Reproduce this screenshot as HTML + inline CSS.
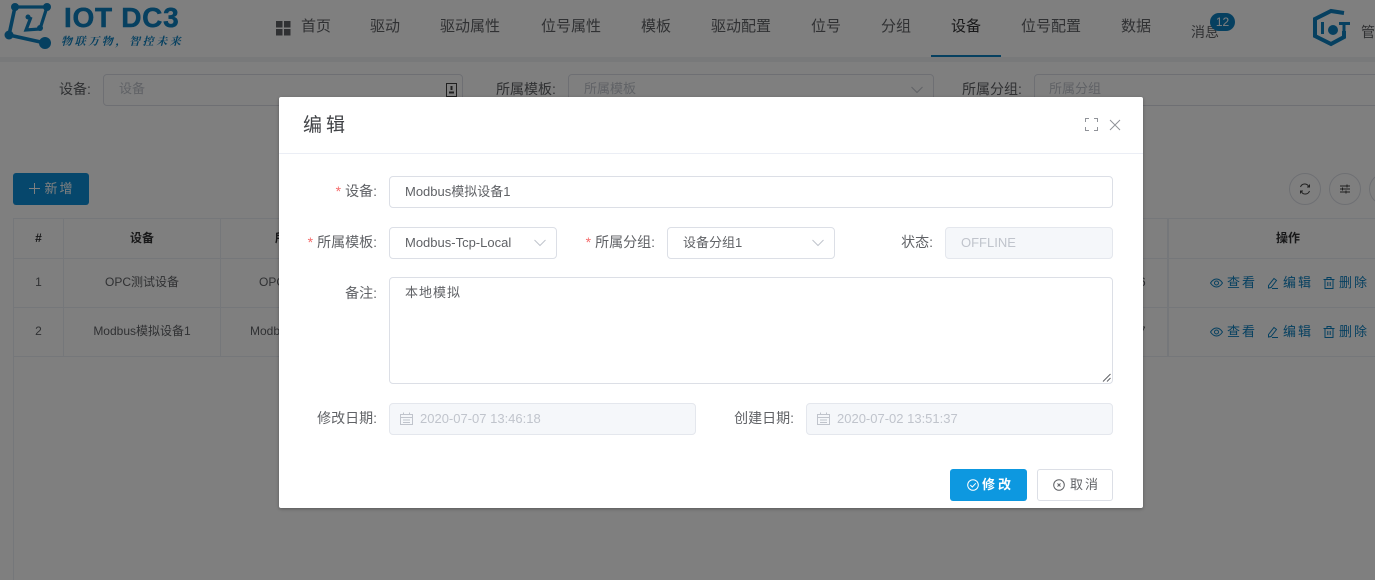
<!DOCTYPE html>
<html lang="zh"><head><meta charset="utf-8"><title>IOT DC3</title>
<style>
*{box-sizing:border-box}
html,body{margin:0;padding:0;width:1375px;height:580px;overflow:hidden;background:#fff;font-family:"Liberation Sans","Noto Sans CJK SC",sans-serif;font-size:14px;color:#606266}
.a{position:absolute;white-space:nowrap}
.nav{top:17px;font-size:15px;line-height:20px;color:#606266}
.inp{border:1px solid #dcdfe6;border-radius:4px;background:#fff}
.mask{position:absolute;left:0;top:0;width:1375px;height:580px;background:rgba(0,0,0,.5)}
.dlg{position:absolute;left:279px;top:97px;width:864px;height:411px;background:#fff;border-radius:2px;box-shadow:0 1px 3px rgba(0,0,0,.3)}
.lab{font-size:14px;line-height:20px;color:#606266;text-align:right}
.req{color:#f56c6c;margin-right:4px}
.box{position:absolute;border:1px solid #dcdfe6;border-radius:4px;background:#fff;font-size:13px;line-height:30px;color:#606266;padding-left:15px;white-space:nowrap}
.dis{background:#f5f7fa;border-color:#e4e7ed;color:#c0c4cc}
.th{font-size:12px;font-weight:700;color:#303133;text-align:center;line-height:20px}
.td{font-size:12px;color:#606266;text-align:center;line-height:20px}
.line{position:absolute;background:#ebeef5}
.op{font-size:13px;color:#0d80c0;letter-spacing:2px;line-height:20px}
.rnd{position:absolute;width:32px;height:32px;border:1px solid #dcdfe6;border-radius:50%;top:173px;background:#fff}
</style></head><body>
<!-- header -->
<svg class="a" style="left:4px;top:3px" width="50" height="48" viewBox="0 0 50 48" fill="none" stroke="#0d80c0" stroke-width="3.6">
<path d="M11 4L43 4L36 26L22 27L27 14" stroke-width="3.200"/><path d="M11 4L5 32L41 40"/>
<g fill="#0d80c0" stroke="none"><circle cx="11" cy="4" r="4"/><circle cx="43" cy="4" r="4"/><circle cx="5" cy="32" r="4.500"/><circle cx="41" cy="40" r="6"/><circle cx="36" cy="25" r="3"/><circle cx="24" cy="14" r="2.500"/></g></svg>
<div class="a" style="left:64px;top:1px;font-size:28px;font-weight:700;line-height:34px;color:#0d80c0;letter-spacing:.7px;-webkit-text-stroke:.5px #0d80c0">IOT DC3</div>
<div class="a" style="left:61px;top:33px;font-family:'Noto Serif CJK SC',serif;font-style:italic;font-size:11px;font-weight:700;line-height:16px;letter-spacing:2.600px;color:#0d80c0">物联万物，智控未来</div>
<svg class="a" style="left:276px;top:21px" width="15" height="15"><path fill="#606266" d="M0 0h6.500v6.500H0zM8 0h6.500v6.500H8zM0 8h6.500v6.500H0zM8 8h6.500v6.500H8z"/></svg>
<div class="a nav" style="left:301px">首页</div>
<div class="a nav" style="left:370px">驱动</div>
<div class="a nav" style="left:440px">驱动属性</div>
<div class="a nav" style="left:541px">位号属性</div>
<div class="a nav" style="left:641px">模板</div>
<div class="a nav" style="left:711px">驱动配置</div>
<div class="a nav" style="left:811px">位号</div>
<div class="a nav" style="left:881px">分组</div>
<div class="a nav" style="left:951px;color:#303133">设备</div>
<div class="a" style="left:931px;top:55px;width:70px;height:2px;background:#0d80c0"></div>
<div class="a nav" style="left:1021px">位号配置</div>
<div class="a nav" style="left:1121px">数据</div>
<div class="a" style="left:1191px;top:23px;font-size:14px;line-height:18px;color:#606266">消息</div>
<div class="a" style="left:1210px;top:13px;width:25px;height:18px;border-radius:9px;background:#0d80c0;color:#fff;font-size:12px;line-height:18px;text-align:center">12</div>
<svg class="a" style="left:1311px;top:8px" width="40" height="40" viewBox="0 0 40 40" fill="none" stroke="#0d80c0" stroke-width="4">
<path d="M33 5L20 3L4 11V28L20 36L33 29L33 23"/><path d="M11.500 14V26" stroke-width="3"/><path d="M28 15.500H39M33 15V27" stroke-width="3"/><circle cx="22" cy="22" r="5" fill="#0d80c0" stroke="none"/></svg>
<div class="a" style="left:1361px;top:23px;font-size:14px;line-height:18px;color:#606266">管理员</div>
<div class="a" style="left:0;top:57px;width:1375px;height:5px;background:#f0f2f5"></div>
<!-- filters -->
<div class="a lab" style="left:59px;top:79px">设备:</div>
<div class="a inp" style="left:103px;top:74px;width:360px;height:32px"></div>
<div class="a" style="left:119px;top:79px;font-size:13px;line-height:20px;color:#c0c4cc">设备</div>
<svg class="a" style="left:446px;top:83px" width="11" height="14" fill="none" stroke="#404040"><rect x=".5" y=".5" width="10" height="13"/><path d="M5.500 3v4M3 9.500h5" stroke-width="2"/></svg>
<div class="a lab" style="left:496px;top:79px">所属模板:</div>
<div class="a inp" style="left:568px;top:74px;width:366px;height:32px"></div>
<div class="a" style="left:584px;top:79px;font-size:13px;line-height:20px;color:#c0c4cc">所属模板</div>
<svg class="a" style="left:911px;top:86px" width="12" height="8" fill="none" stroke="#c0c4cc"><path d="M.5 1L6 6.500L11.500 1"/></svg>
<div class="a lab" style="left:962px;top:79px">所属分组:</div>
<div class="a inp" style="left:1034px;top:74px;width:360px;height:32px"></div>
<div class="a" style="left:1049px;top:79px;font-size:13px;line-height:20px;color:#c0c4cc">所属分组</div>
<!-- toolbar -->
<div class="a" style="left:13px;top:173px;width:76px;height:32px;border-radius:3px;background:#0d8fd8;color:#fff;font-size:13px;line-height:32px;text-align:center;letter-spacing:2px;padding-left:2px">
<svg width="11" height="11" style="vertical-align:-1px;margin-right:4px"><path d="M5.500 0v11M0 5.500h11" stroke="#fff" fill="none"/></svg>新增</div>
<div class="rnd" style="left:1289px"><svg width="30" height="30" fill="none" stroke="#404040"><path d="M10.500 13a4.500 4.500 0 0 1 8-1l.5 1M19.500 17a4.500 4.500 0 0 1-8 1l-.5-1M19.500 10.500v2.500h-2.500M10.500 19.500v-2.500h2.500"/></svg></div>
<div class="rnd" style="left:1329px"><svg width="30" height="30" fill="none" stroke="#404040"><path d="M10 12h10M10 15h10M10 18h10M17 10.500v3M12.500 13.500v3M16 16.500v3"/></svg></div>
<div class="rnd" style="left:1369px"></div>
<!-- table -->
<div class="line" style="left:13px;top:218px;width:1362px;height:1px"></div>
<div class="line" style="left:13px;top:258px;width:1362px;height:1px"></div>
<div class="line" style="left:13px;top:307px;width:1362px;height:1px"></div>
<div class="line" style="left:13px;top:356px;width:1362px;height:1px"></div>
<div class="line" style="left:13px;top:218px;width:1px;height:362px"></div>
<div class="line" style="left:63px;top:218px;width:1px;height:138px"></div>
<div class="line" style="left:220px;top:218px;width:1px;height:138px"></div>
<div class="line" style="left:1167px;top:218px;width:2px;height:138px"></div>
<div class="a th" style="left:14px;top:228px;width:49px">#</div>
<div class="a th" style="left:64px;top:228px;width:156px">设备</div>
<div class="a th" style="left:275px;top:228px">所属模板</div>
<div class="a th" style="left:1185px;top:228px;width:206px">操作</div>
<div class="a td" style="left:14px;top:272px;width:49px">1</div>
<div class="a td" style="left:64px;top:272px;width:156px">OPC测试设备</div>
<div class="a td" style="left:259px;top:272px">OPC-Local</div>
<div class="a td" style="left:1139px;top:272px">6</div>
<div class="a" style="left:14px;top:308px;width:1361px;height:48px;background:#f5f7fa;z-index:-1"></div>
<div class="a td" style="left:14px;top:321px;width:49px">2</div>
<div class="a td" style="left:64px;top:321px;width:156px">Modbus模拟设备1</div>
<div class="a td" style="left:250px;top:321px">Modbus-Tcp</div>
<div class="a td" style="left:1139px;top:321px">7</div>
<svg width="0" height="0" style="position:absolute"><defs>
<g id="eye" fill="none" stroke="#0d80c0"><path d="M.5 6C2.500 3 4.500 2 6.500 2S10.500 3 12.500 6C10.500 9 8.500 10 6.500 10S2.500 9 .5 6z"/><circle cx="6.500" cy="6" r="2"/></g>
<g id="pen" fill="none" stroke="#0d80c0"><path d="M7 1.500L9.500 3.500L4 10.500L1.500 11V8.500zM5 11.500H11"/></g>
<g id="bin" fill="none" stroke="#0d80c0"><path d="M.5 2.500H11.500M4 2.500V.5H8V2.500M2 2.500V11.500H10V2.500M4.800 5V9M7.200 5V9"/></g>
</defs></svg>
<div class="a op" style="left:1227px;top:273px">查看</div>
<div class="a op" style="left:1283px;top:273px">编辑</div>
<div class="a op" style="left:1339px;top:273px">删除</div>
<svg class="a" style="left:1210px;top:277px" width="13" height="12"><use href="#eye"/></svg>
<svg class="a" style="left:1267px;top:277px" width="12" height="12"><use href="#pen"/></svg>
<svg class="a" style="left:1323px;top:277px" width="12" height="12"><use href="#bin"/></svg>
<div class="a op" style="left:1227px;top:322px">查看</div>
<div class="a op" style="left:1283px;top:322px">编辑</div>
<div class="a op" style="left:1339px;top:322px">删除</div>
<svg class="a" style="left:1210px;top:326px" width="13" height="12"><use href="#eye"/></svg>
<svg class="a" style="left:1267px;top:326px" width="12" height="12"><use href="#pen"/></svg>
<svg class="a" style="left:1323px;top:326px" width="12" height="12"><use href="#bin"/></svg>

<div class="mask"></div>
<!-- dialog -->
<div class="dlg">
<div class="a" style="left:24px;top:16px;font-size:19px;line-height:26px;letter-spacing:4px;color:#404246">编辑</div>
<svg class="a" style="left:806px;top:21px" width="13" height="13" fill="none" stroke="#909399"><path d="M.5 4V.5H4M9 .5h3.500V4M12.500 9v3.500H9M4 12.500H.5V9"/></svg>
<svg class="a" style="left:830px;top:22px" width="12" height="12" fill="none" stroke="#909399"><path d="M1 1L11 11M11 1L1 11"/></svg>
<div class="a" style="left:0;top:56px;width:864px;height:1px;background:#ebeef5"></div>

<div class="a lab" style="right:766px;top:84px"><span class="req">*</span>设备:</div>
<div class="box" style="left:110px;top:79px;width:724px;height:32px">Modbus模拟设备1</div>

<div class="a lab" style="right:766px;top:135px"><span class="req">*</span>所属模板:</div>
<div class="box" style="left:110px;top:130px;width:168px;height:32px">Modbus-Tcp-Local<svg class="a" style="left:144px;top:11px" width="12" height="8" fill="none" stroke="#c0c4cc"><path d="M.5 1L6 6.500L11.500 1"/></svg></div>

<div class="a lab" style="right:488px;top:135px"><span class="req">*</span>所属分组:</div>
<div class="box" style="left:388px;top:130px;width:168px;height:32px">设备分组1<svg class="a" style="left:144px;top:11px" width="12" height="8" fill="none" stroke="#c0c4cc"><path d="M.5 1L6 6.500L11.500 1"/></svg></div>

<div class="a lab" style="right:210px;top:135px">状态:</div>
<div class="box dis" style="left:666px;top:130px;width:168px;height:32px">OFFLINE</div>

<div class="a lab" style="right:766px;top:186px">备注:</div>
<div class="box" style="left:110px;top:180px;width:724px;height:107px;line-height:20px;padding-top:5px;letter-spacing:1px">本地模拟<svg class="a" style="right:1px;bottom:1px" width="9" height="9" fill="none" stroke="#606266"><path d="M8.500 1L1 8.500M8.500 5L5 8.500"/></svg></div>

<div class="a lab" style="right:766px;top:311px">修改日期:</div>
<div class="box dis" style="left:110px;top:306px;width:307px;height:32px;padding-left:30px">2020-07-07 13:46:18<svg class="a" style="left:10px;top:8px" width="13" height="13" fill="none" stroke="#c0c4cc"><path d="M.5 2.500H12.500V12.500H.5zM.5 5.500H12.500M3.500 .5V3M9.500 .5V3M3 8H10M3 10.500H10"/></svg></div>

<div class="a lab" style="right:349px;top:311px">创建日期:</div>
<div class="box dis" style="left:527px;top:306px;width:307px;height:32px;padding-left:30px">2020-07-02 13:51:37<svg class="a" style="left:10px;top:8px" width="13" height="13" fill="none" stroke="#c0c4cc"><path d="M.5 2.500H12.500V12.500H.5zM.5 5.500H12.500M3.500 .5V3M9.500 .5V3M3 8H10M3 10.500H10"/></svg></div>

<div class="a" style="left:671px;top:372px;width:77px;height:32px;border-radius:3px;background:#0d98e0;color:#fff;font-size:13px;font-weight:700;line-height:32px;text-align:center;letter-spacing:3px;padding-left:4px"><svg width="12" height="12" viewBox="0 0 12 12" fill="none" stroke="#fff" style="vertical-align:-2px;margin-right:3px"><circle cx="6" cy="6" r="5.300"/><path d="M3.300 6L5.300 8L8.800 4.300"/></svg>修改</div>
<div class="a" style="left:758px;top:372px;width:76px;height:32px;border-radius:3px;border:1px solid #dcdfe6;background:#fff;color:#606266;font-size:13px;line-height:30px;text-align:center;letter-spacing:2px;padding-left:3px"><svg width="12" height="12" viewBox="0 0 12 12" fill="none" stroke="#606266" style="vertical-align:-2px;margin-right:5px"><circle cx="6" cy="6" r="5.300"/><path d="M4.500 4.500L7.500 7.500M7.500 4.500L4.500 7.500"/></svg>取消</div>
</div>
</body></html>
